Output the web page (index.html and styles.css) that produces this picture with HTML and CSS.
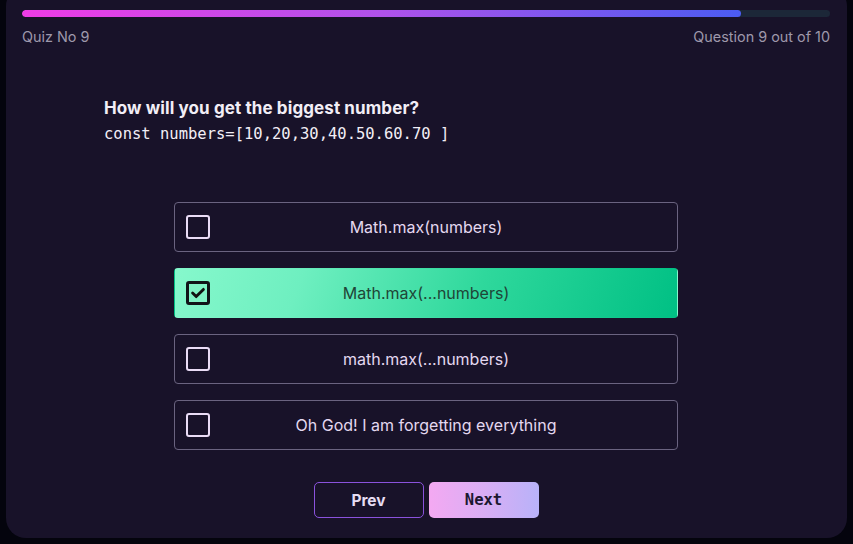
FILE: index.html
```html
<!DOCTYPE html>
<html lang="en">
<head>
<meta charset="utf-8">
<title>Quiz</title>
<link rel="stylesheet" href="styles.css">
</head>
<body>
<main class="card">
  <div class="progress"><div class="progress-fill" style="width:89%"></div></div>
  <div class="meta">
    <span>Quiz No 9</span>
    <span>Question 9 out of 10</span>
  </div>
  <section class="question">
    <h1 class="q-title">How will you get the biggest number?</h1>
    <code class="q-code">const numbers=[10,20,30,40.50.60.70 ]</code>
  </section>
  <ul class="options">
    <li class="option"><span class="box"></span><span class="label">Math.max(numbers)</span></li>
    <li class="option selected"><span class="box"><svg viewBox="0 0 20 20" width="18" height="18"><path d="M4 10 L8 14 L16 6" fill="none" stroke="#111" stroke-width="3.2" stroke-linecap="round" stroke-linejoin="round"/></svg></span><span class="label">Math.max(...numbers)</span></li>
    <li class="option"><span class="box"></span><span class="label">math.max(...numbers)</span></li>
    <li class="option"><span class="box"></span><span class="label">Oh God! I am forgetting everything</span></li>
  </ul>
  <div class="actions">
    <button class="btn prev">Prev</button>
    <button class="btn next">Next</button>
  </div>
</main>
</body>
</html>
```
FILE: styles.css
```css
html, body {
  margin: 0;
  padding: 0;
  background: #04040d;
  height: 544px;
  overflow: hidden;
}
.card {
  box-sizing: border-box;
  margin: -14px 6px 0;
  height: 552px;
  border-radius: 20px;
  background: #181229;
  padding: 24px 17px 0 16px;
  font-family: Inter, "Noto Sans", sans-serif;
  display: flex;
  flex-direction: column;
}
.progress {
  height: 7px;
  border-radius: 4px;
  background: #1c2738;
  overflow: hidden;
}
.progress-fill {
  height: 100%;
  border-radius: 4px;
  background: linear-gradient(90deg, #ef3ce6 0%, #b052ea 50%, #4b5cf2 100%);
}
.meta {
  display: flex;
  justify-content: space-between;
  margin-top: 11px;
  font-size: 14.4px;
  line-height: 17px;
  color: #9e98ab;
}
.question {
  margin: 53px 0 0 82px;
}
.q-title {
  margin: 0;
  font-size: 17px;
  line-height: 20px;
  font-weight: 700;
  color: #f2eef6;
  letter-spacing: 0.1px;
}
.q-code {
  display: block;
  margin-top: 6px;
  font-family: "DejaVu Sans Mono", monospace;
  font-size: 15.5px;
  line-height: 20px;
  color: #f2eef6;
}
.options {
  list-style: none;
  margin: 58px auto 0;
  padding: 0;
  width: 504px;
  display: flex;
  flex-direction: column;
  gap: 16px;
}
.option {
  box-sizing: border-box;
  height: 50px;
  border: 1px solid #6a6380;
  border-radius: 4px;
  display: flex;
  align-items: center;
  padding: 0 11px;
  color: #e4d8f0;
  font-size: 16px;
}
.box {
  box-sizing: border-box;
  width: 24px;
  height: 24px;
  flex: none;
  border: 2px solid #eadcf6;
  border-radius: 3px;
  display: flex;
  align-items: center;
  justify-content: center;
}
.label {
  flex: 1;
  text-align: center;
  margin-right: 24px;
}
.option.selected {
  border-color: transparent;
  background: linear-gradient(110deg, #86f8cc 0%, #6eefc0 25%, #2fd89c 60%, #00c084 100%);
  color: #1f4537;
}
.option.selected .box {
  border: 3px solid #111318;
  background: #80f3c6;
}
.actions {
  margin-top: 32px;
  display: flex;
  justify-content: center;
  gap: 5px;
}
.btn {
  box-sizing: border-box;
  width: 110px;
  height: 36px;
  border-radius: 5px;
  font-size: 15.5px;
  font-weight: 700;
  cursor: pointer;
}
.prev {
  background: transparent;
  border: 1px solid #8a52dc;
  color: #e6dcf2;
  font-family: Inter, "Noto Sans", sans-serif;
}
.next {
  border: none;
  background: linear-gradient(90deg, #f4a9f2 0%, #d9aef4 50%, #b8b2f9 100%);
  color: #1b1730;
  font-family: "DejaVu Sans Mono", monospace;
}
```
